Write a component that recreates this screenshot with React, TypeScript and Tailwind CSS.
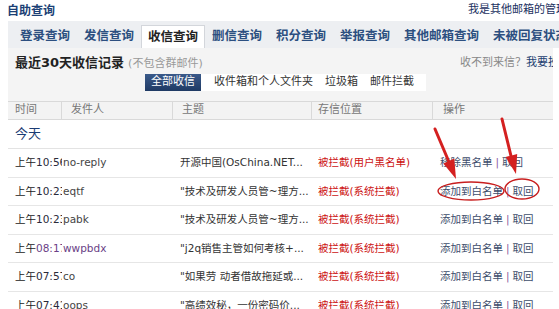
const rows = [
  { d: '10:56', s: 'no-reply', sub: '开源中国(OsChina.NET...', loc: '被拦截(用户黑名单)', op: '移除黑名单', v: false },
  { d: '10:23', s: 'eqtf', sub: '"技术及研发人员管~理方...', loc: '被拦截(系统拦截)', op: '添加到白名单', v: false },
  { d: '10:23', s: 'pabk', sub: '"技术及研发人员管~理方...', loc: '被拦截(系统拦截)', op: '添加到白名单', v: false },
  { d: '08:17', s: 'wwpbdx', sub: '"j2q销售主管如何考核+...', loc: '被拦截(系统拦截)', op: '添加到白名单', v: true },
  { d: '07:57', s: 'co', sub: '"如果劳 动者借故拖延或...', loc: '被拦截(系统拦截)', op: '添加到白名单', v: false },
  { d: '07:41', s: 'oops', sub: '"高绩效秘，一份密码价...', loc: '被拦截(系统拦截)', op: '添加到白名单', v: false },
];

const tabs = ['登录查询', '发信查询', '收信查询', '删信查询', '积分查询', '举报查询', '其他邮箱查询', '未被回复状态'];

const Annotations = () => (
  <svg className="absolute left-0 top-0 pointer-events-none" width="559" height="309" viewBox="0 0 559 309">
    <line x1="435" y1="129" x2="449" y2="162" stroke="#d42020" strokeWidth="3" strokeLinecap="round" />
    <polygon points="456,179 454.3,158.6 443.3,163.4" fill="#d42020" />
    <line x1="502" y1="119" x2="511" y2="156" stroke="#d42020" strokeWidth="3" strokeLinecap="round" />
    <polygon points="516,174 517.2,154 505.6,157" fill="#d42020" />
    <ellipse cx="471" cy="191" rx="33" ry="9" fill="none" stroke="#c81e1e" strokeWidth="1.4" />
    <ellipse cx="522" cy="189" rx="17" ry="10" fill="none" stroke="#c81e1e" strokeWidth="1.4" />
  </svg>
);

export default function App() {
  return (
    <div className="relative w-[559px] h-[309px] overflow-hidden bg-white text-[11px] text-[#333] font-['DejaVu_Sans','Noto_Sans_CJK_SC',sans-serif]">
      <div className="flex h-[21px] items-center overflow-hidden pl-[7px]">
        <span className="w-[461px] shrink-0 text-[12px] font-bold text-[#1b3f75]">自助查询</span>
        <span className="shrink-0 whitespace-nowrap text-[11px] text-[#1a3060]">我是其他邮箱的管理员</span>
      </div>

      <div className="ml-[8px] flex h-[27px] items-end overflow-hidden bg-[#edeff2] pl-[5px]">
        {tabs.map((t, i) =>
          i === 2 ? (
            <div
              key={t}
              className="flex h-[23px] shrink-0 items-center border border-b-0 border-[#d3d6db] bg-white px-[6px] text-[12.5px] font-bold text-[#222]"
            >
              {t}
            </div>
          ) : (
            <div
              key={t}
              className="flex h-[23px] shrink-0 items-center whitespace-nowrap px-[7px] text-[12.5px] font-bold text-[#2c4f80]"
            >
              {t}
            </div>
          )
        )}
      </div>

      <div className="ml-[8px] w-[545px]">
        <div className="flex h-[53px] flex-col bg-[#f4f4f4]">
          <div className="mt-[7px] flex h-[16px] items-center overflow-hidden pl-[7px]">
            <div className="flex w-[445px] shrink-0 items-baseline">
              <span className="text-[13px] font-bold text-[#222]">最近30天收信记录</span>
              <span className="ml-[4px] text-[11px] text-[#999]">(不包含群邮件)</span>
            </div>
            <div className="shrink-0 whitespace-nowrap text-[11px]">
              <span className="text-[#888]">收不到来信？</span>
              <span className="text-[#1d3f70]">我要投诉</span>
            </div>
          </div>
          <div className="mt-[3px] flex h-[17px] pl-[137px]">
            <div className="flex items-center bg-gradient-to-b from-[#3a5a8a] to-[#1f3a64] px-[6px] text-white">全部收信</div>
            <div className="flex w-[225px] items-center bg-white pl-[7px]">
              <span className="px-[6px]">收件箱和个人文件夹</span>
              <span className="px-[6px]">垃圾箱</span>
              <span className="px-[6px]">邮件拦截</span>
            </div>
          </div>
        </div>

        <div className="flex h-[19px] border-y border-[#d9d9d9] bg-[#f3f3f3] text-[#777]">
          <div className="flex w-[54px] items-center border-r border-[#d9d9d9] pl-[7px]">时间</div>
          <div className="flex w-[111px] items-center border-r border-[#d9d9d9] pl-[9px]">发件人</div>
          <div className="flex w-[139px] items-center border-r border-[#d9d9d9] pl-[9px]">主题</div>
          <div className="flex w-[121px] items-center border-r border-[#d9d9d9] pl-[6px]">存信位置</div>
          <div className="flex flex-1 items-center pl-[10px]">操作</div>
        </div>

        <div className="flex h-[29px] items-center border-b border-[#e3e3e3] pl-[7px] text-[13px] text-[#1a3b73]">今天</div>

        {rows.map((r, i) => (
          <div key={i} className="flex h-[28.6px] items-center whitespace-nowrap border-b border-[#e6e6e6] text-[10.5px]">
            <div className="w-[54px] shrink-0 overflow-hidden pl-[7px]">
              <span className="text-[#222]">上午</span>
              <span className={r.v ? 'text-[#6a3f86]' : 'text-[#2a2a3a]'}>{r.d}</span>
            </div>
            <div className={`w-[118px] shrink-0 overflow-hidden pl-[1px] ${r.v ? 'text-[#6a3f86]' : 'text-[#444]'}`}>{r.s}</div>
            <div className="w-[138px] shrink-0 overflow-hidden text-[#333]">{r.sub}</div>
            <div className="w-[122px] shrink-0 overflow-hidden text-[#cc1111]">{r.loc}</div>
            <div className="flex-1 text-[#3d4d6b]">
              {r.op}
              <span className="mx-[3px] text-[#8a5aa0]">|</span>
              取回
            </div>
          </div>
        ))}
      </div>

      <Annotations />
    </div>
  );
}
